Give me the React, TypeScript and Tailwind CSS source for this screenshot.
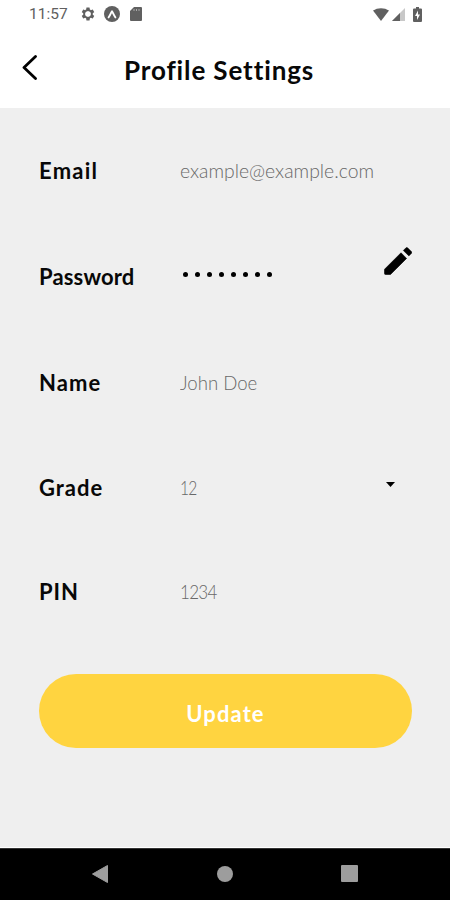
import React from 'react';
import { MdSettings } from 'react-icons/md';

const fields = [
  { id: 'email', label: 'Email', value: 'example@example.com', row: 'h-[106px]', labelClass: 'tracking-[1.25px]', valueClass: 'scale-x-[0.968]' },
  { id: 'password', label: 'Password', value: '', row: 'h-[106px]', labelClass: 'tracking-[0.15px]', valueClass: '' },
  { id: 'name', label: 'Name', value: 'John Doe', row: 'h-[106px]', labelClass: 'tracking-[1.1px]', valueClass: 'scale-x-[0.93]' },
  { id: 'grade', label: 'Grade', value: '12', row: 'h-[104px]', labelClass: 'tracking-[1px]', valueClass: 'scale-x-[0.78] tracking-[-1px]' },
  { id: 'pin', label: 'PIN', value: '1234', row: 'h-[104px]', labelClass: 'tracking-[0.9px]', valueClass: 'scale-x-[0.85] tracking-[-0.8px]' },
];

const StatusBar = () => (
  <div className="h-7 flex items-center justify-between pl-[29px] pr-[28px] text-[#606060]">
    <div className="flex items-center">
      <span className="w-[51px] font-[Roboto] text-[15.5px] leading-7">11:57</span>
      <svg className="w-4 h-4" viewBox="0 0 24 24">
        <MdSettings size={24} />
        <circle cx="12" cy="12" r="4.2" fill="#fff" />
      </svg>
      <svg className="w-4 h-4 ml-[8px]" viewBox="0 0 16 16">
        <circle cx="8" cy="8" r="8" fill="currentColor" />
        <path d="M4.6 11.4C6 9.8 7 6.6 8 5.2c1 1.400 2 4.600 3.400 6.200" fill="none" stroke="#fff" strokeWidth="1.900" strokeLinecap="round" strokeLinejoin="round" />
      </svg>
      <svg className="w-3 h-[14px] ml-[10px]" viewBox="0 0 12 14">
        <path d="M4 0h7a1 1 0 0 1 1 1v12a1 1 0 0 1-1 1H1a1 1 0 0 1-1-1V4Z" fill="currentColor" />
        <path d="M4 2v2M6.500 2v2M9 2v2" stroke="#aaa" strokeWidth="1" />
      </svg>
    </div>
    <div className="flex items-center">
      <svg className="w-4 h-[13px]" viewBox="0 0 16 13">
        <path d="M0 2.600C4.500-.7 11.500-.7 16 2.600L8 13Z" fill="currentColor" />
      </svg>
      <svg className="w-[13px] h-[13px] ml-[3px]" viewBox="0 0 13 13">
        <path d="M13 0V13H0Z" fill="#c8c8c8" />
        <path d="M8 5V13H0Z" fill="currentColor" />
      </svg>
      <svg className="w-[9px] h-[15px] ml-2" viewBox="0 0 9 15">
        <path d="M3 0h3v1.500h2a1 1 0 0 1 1 1V14a1 1 0 0 1-1 1H1a1 1 0 0 1-1-1V2.500a1 1 0 0 1 1-1h2Z" fill="currentColor" />
        <path d="M5 3.500 2 9h2v4l3-5.500H5Z" fill="#fff" />
      </svg>
    </div>
  </div>
);

const Header = () => (
  <header className="h-20 flex items-center pl-[22px]">
    <svg className="w-[15px] h-[25px] mt-[-1px]" viewBox="0 0 15 25">
      <path d="M13.500 1.500 2 12.500l11.500 11" fill="none" stroke="#000" strokeWidth="2.800" strokeLinecap="round" strokeLinejoin="round" />
    </svg>
    <h1 className="ml-[87px] mt-1 text-[26px] font-bold leading-8 tracking-[0.87px] whitespace-nowrap">
      Profile Settings
    </h1>
  </header>
);

const PasswordDots = () => (
  <div className="flex gap-[7px] pl-[3px] -mt-1">
    {Array.from({ length: 8 }, (_, i) => (
      <span key={i} className="w-[5px] h-[5px] rounded-full bg-black" />
    ))}
  </div>
);

const Pencil = () => (
  <svg className="w-7 h-7 mt-[-33px] mr-px" viewBox="0 0 28 28">
    <path d="M.5 22.300 17 5.800l5.600 5.600L6.500 27.500h-5a1 1 0 0 1-1-1Z" fill="#000" stroke="#000" strokeWidth=".6" strokeLinejoin="round" />
    <path d="m19.300 3.500 2.700-2.700q.8-.7 1.600 0l4 4q.6.800 0 1.400l-2.700 2.700Z" fill="#000" stroke="#000" strokeWidth=".5" strokeLinejoin="round" />
  </svg>
);

const App = () => {
  return (
    <div className="w-[450px] h-[900px] flex flex-col overflow-hidden bg-white text-[#080808] font-[Lato,sans-serif]">
      <StatusBar />
      <Header />

      <main className="h-[739px] bg-[#efefef] pt-2.5 pl-[39px] pr-[37px]">
        {fields.map((f) => (
          <div key={f.id} className={`flex items-center ${f.row}`}>
            <div className={`w-[141px] text-[22px] font-bold leading-7 ${f.labelClass}`}>{f.label}</div>
            <div className={`flex-1 -mt-0.5 text-[20px] font-light leading-7 text-[#686868] whitespace-nowrap origin-left ${f.valueClass}`}>
              {f.id === 'password' ? <PasswordDots /> : f.value}
            </div>
            {f.id === 'password' && <Pencil />}
            {f.id === 'grade' && (
              <svg className="w-[9px] h-[5px] mr-[18px] mt-[-7px]" viewBox="0 0 9 5">
                <path d="M0 0h9L4.500 5Z" fill="#000" />
              </svg>
            )}
          </div>
        ))}

        <button className="mt-[30px] w-[373px] h-[74px] rounded-full bg-[#ffd440] text-white text-[22px] font-bold tracking-[1.100px] pt-1">
          Update
        </button>
      </main>

      <nav className="mt-px h-[52px] bg-black border-t border-[#333] flex items-center text-[#9d9d9d]">
        <svg className="w-4 h-[18px] ml-[92px] -mt-0.5" viewBox="0 0 16 18">
          <path d="M15.500.5v17L.5 9Z" fill="currentColor" stroke="currentColor" strokeLinejoin="round" />
        </svg>
        <div className="w-4 h-4 rounded-full bg-[#9d9d9d] ml-[109px] -mt-0.5" />
        <div className="w-[17px] h-[17px] rounded-[1px] bg-[#9d9d9d] ml-[108px] -mt-0.5" />
      </nav>
    </div>
  );
};

export default App;
